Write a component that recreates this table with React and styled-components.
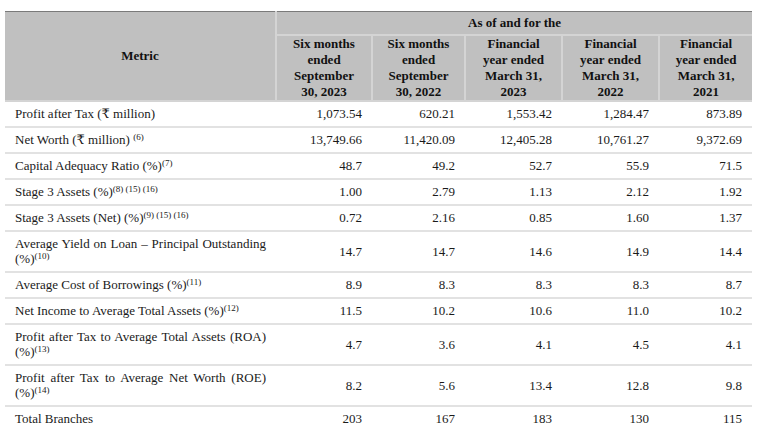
import React from "react";
import styled, { createGlobalStyle } from "styled-components";

const Global = createGlobalStyle`
  html, body { margin: 0; padding: 0; background: #ffffff; }
  body { font-family: "Liberation Serif", "DejaVu Serif", serif; color: #1a1a1a; }
`;

const Page = styled.div`
  padding: 11px 16px 0 5px;
`;

const Table = styled.table`
  width: 747px;
  table-layout: fixed;
  border-collapse: collapse;
  font-size: 13px;
  border-top: 1px solid #7a7a7a;
`;

const HeadCell = styled.th`
  background: #c0c0c0;
  font-weight: bold;
  text-align: center;
  vertical-align: middle;
  line-height: 16px;
  padding: ${(p) => (p.$top ? "3px 4px" : "0 4px")};
  border-left: ${(p) => (p.$first ? "none" : "2px solid #d4d4d4")};
  border-bottom: 2px solid #d4d4d4;
  color: #111;
`;

const Row = styled.tr`
  border-bottom: 2px solid #e2e2e2;
`;

const MetricCell = styled.td`
  text-align: justify;
  padding: 4px 10px 5px;
  line-height: 15px;
  vertical-align: middle;
`;

const ValueCell = styled.td`
  text-align: right;
  padding: 4px 10px 5px 4px;
  line-height: 15px;
  vertical-align: middle;
`;

const Sup = styled.sup`
  font-size: 9px;
  line-height: 0;
  vertical-align: 4px;
`;

const rows = [
  { m: <>Profit after Tax (₹ million)</>, v: ["1,073.54", "620.21", "1,553.42", "1,284.47", "873.89"] },
  { m: <>Net Worth (₹ million) <Sup>(6)</Sup></>, v: ["13,749.66", "11,420.09", "12,405.28", "10,761.27", "9,372.69"] },
  { m: <>Capital Adequacy Ratio (%)<Sup>(7)</Sup></>, v: ["48.7", "49.2", "52.7", "55.9", "71.5"] },
  { m: <>Stage 3 Assets (%)<Sup>(8) (15) (16)</Sup></>, v: ["1.00", "2.79", "1.13", "2.12", "1.92"] },
  { m: <>Stage 3 Assets (Net) (%)<Sup>(9) (15) (16)</Sup></>, v: ["0.72", "2.16", "0.85", "1.60", "1.37"] },
  { m: <>Average Yield on Loan – Principal Outstanding (%)<Sup>(10)</Sup></>, v: ["14.7", "14.7", "14.6", "14.9", "14.4"] },
  { m: <>Average Cost of Borrowings (%)<Sup>(11)</Sup></>, v: ["8.9", "8.3", "8.3", "8.3", "8.7"] },
  { m: <>Net Income to Average Total Assets (%)<Sup>(12)</Sup></>, v: ["11.5", "10.2", "10.6", "11.0", "10.2"] },
  { m: <>Profit after Tax to Average Total Assets (ROA) (%)<Sup>(13)</Sup></>, v: ["4.7", "3.6", "4.1", "4.5", "4.1"] },
  { m: <>Profit after Tax to Average Net Worth (ROE) (%)<Sup>(14)</Sup></>, v: ["8.2", "5.6", "13.4", "12.8", "9.8"] },
  { m: <>Total Branches</>, v: ["203", "167", "183", "130", "115"] },
];

const headers = [
  ["Six months", "ended", "September", "30, 2023"],
  ["Six months", "ended", "September", "30, 2022"],
  ["Financial", "year ended", "March 31,", "2023"],
  ["Financial", "year ended", "March 31,", "2022"],
  ["Financial", "year ended", "March 31,", "2021"],
];

export default function App() {
  return (
    <Page>
      <Global />
      <Table>
        <colgroup>
          <col style={{ width: 271 }} />
          <col style={{ width: 96 }} />
          <col style={{ width: 93 }} />
          <col style={{ width: 97 }} />
          <col style={{ width: 97 }} />
          <col style={{ width: 93 }} />
        </colgroup>
        <thead>
          <tr>
            <HeadCell $first rowSpan={2}>Metric</HeadCell>
            <HeadCell $top colSpan={5}>As of and for the</HeadCell>
          </tr>
          <tr>
            {headers.map((h, i) => (
              <HeadCell key={i}>
                {h.map((l, j) => (
                  <React.Fragment key={j}>
                    {l}
                    {j < h.length - 1 && <br />}
                  </React.Fragment>
                ))}
              </HeadCell>
            ))}
          </tr>
        </thead>
        <tbody>
          {rows.map((r, i) => (
            <Row key={i}>
              <MetricCell>{r.m}</MetricCell>
              {r.v.map((v, j) => (
                <ValueCell key={j}>{v}</ValueCell>
              ))}
            </Row>
          ))}
        </tbody>
      </Table>
    </Page>
  );
}
